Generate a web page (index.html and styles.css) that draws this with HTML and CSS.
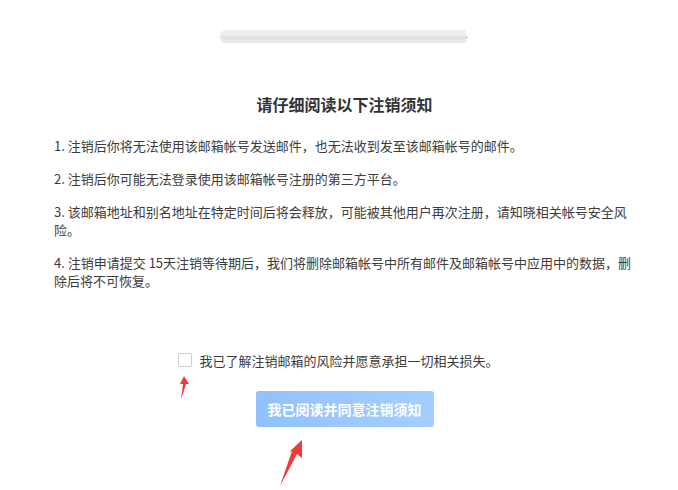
FILE: index.html
```html
<!DOCTYPE html>
<html lang="zh-CN">
<head>
<meta charset="utf-8">
<title>注销须知</title>
<link rel="stylesheet" href="styles.css">
</head>
<body>
<div class="page">
  <div class="blur-head"><span class="blur-dot">.</span></div>
  <div class="notice">
    <h2 class="title">请仔细阅读以下注销须知</h2>
    <p class="item">1. 注销后你将无法使用该邮箱帐号发送邮件，也无法收到发至该邮箱帐号的邮件。</p>
    <p class="item">2. 注销后你可能无法登录使用该邮箱帐号注册的第三方平台。</p>
    <p class="item">3. 该邮箱地址和别名地址在特定时间后将会释放，可能被其他用户再次注册，请知晓相关帐号安全风险。</p>
    <p class="item">4. 注销申请提交 15天注销等待期后，我们将删除邮箱帐号中所有邮件及邮箱帐号中应用中的数据，删除后将不可恢复。</p>
    <label class="agree"><span class="box"></span><span class="agree-text">我已了解注销邮箱的风险并愿意承担一切相关损失。</span></label>
    <div class="actions"><button class="btn" disabled>我已阅读并同意注销须知</button></div>
  </div>
  <svg class="arrow arrow-1" width="20" height="30" viewBox="0 0 20 30"><polygon points="9,0 14,8 11,8 6,24 8,8 5,8" fill="#f03a3a"/></svg>
  <svg class="arrow arrow-2" width="40" height="52" viewBox="0 0 40 52"><polygon points="31,0 31,18 26,14 9,46 21,11 18,12" fill="#f03a3a"/></svg>
</div>
</body>
</html>
```
FILE: styles.css
```css
html, body {
  margin: 0;
  padding: 0;
  background: #fff;
}
.page {
  position: relative;
  width: 678px;
  height: 490px;
  overflow: hidden;
  font-family: "Noto Sans CJK SC", "Microsoft YaHei", sans-serif;
}
.blur-head {
  margin: 30px 0 0 220px;
  width: 246px;
  height: 13px;
  border-radius: 6px 2px 2px 6px;
  background: linear-gradient(to bottom, #ececec 0%, #ececec 45%, #dedede 46%, #e6e6e6 100%);
  position: relative;
  opacity: 0.85;
  filter: blur(0.6px);
}
.blur-dot {
  position: absolute;
  right: -2px;
  top: -4px;
  font-size: 10px;
  color: #555;
}
.notice {
  margin-left: 54px;
  width: 581px;
}
.title {
  margin: 50px 0 0;
  font-size: 16px;
  line-height: 22px;
  font-weight: bold;
  color: #333;
  text-align: center;
}
.item {
  margin: 0 0 15px;
  font-size: 13px;
  line-height: 18px;
  color: #3c3c3c;
}
.title + .item {
  margin-top: 22px;
}
.agree {
  margin-top: 61px;
  display: flex;
  justify-content: center;
  align-items: center;
  padding-right: 12px;
  height: 18px;
  font-size: 13px;
  color: #3c3c3c;
}
.box {
  width: 12px;
  height: 12px;
  border: 1px solid #cfcfcf;
  border-radius: 2px;
  background: #fff;
  margin-right: 7px;
  flex: none;
}
.actions {
  margin-top: 22px;
  display: flex;
  justify-content: center;
}
.btn {
  width: 178px;
  height: 36px;
  border: none;
  border-radius: 3px;
  background: linear-gradient(to right, #92c1fb, #a4cefd);
  color: #fff;
  font-family: "Noto Sans CJK SC", "Microsoft YaHei", sans-serif;
  font-size: 14px;
  font-weight: bold;
  padding: 0;
}
.arrow {
  position: absolute;
}
.arrow-1 {
  left: 175px;
  top: 376px;
}
.arrow-2 {
  left: 271px;
  top: 440px;
}
```
